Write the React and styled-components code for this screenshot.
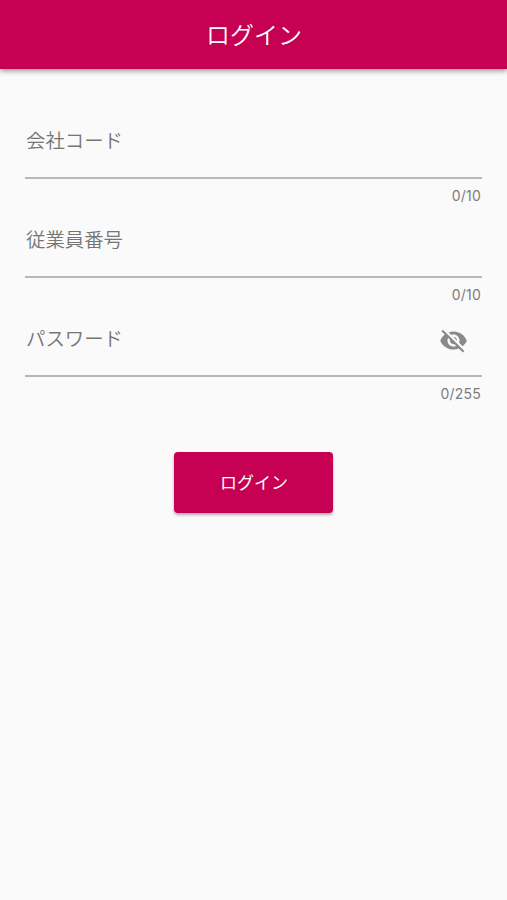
import { useState } from 'react';
import styled, { createGlobalStyle } from 'styled-components';
import { MdVisibility, MdVisibilityOff } from 'react-icons/md';

const FIELDS = [
    { name: 'company', label: '会社コード', max: 10 },
    { name: 'employee', label: '従業員番号', max: 10 },
    { name: 'password', label: 'パスワード', max: 255, secret: true },
];

const App = () => {
    const [values, setValues] = useState({ company: '', employee: '', password: '' });
    const [visible, setVisible] = useState(false);

    return (
        <Screen>
            <GlobalStyle/>
            <AppBar>
                <h1>ログイン</h1>
            </AppBar>
            <Form onSubmit={(e) => e.preventDefault()}>
                {FIELDS.map((field) => (
                    <Field key={field.name}>
                        <InputRow>
                            <input
                                type={field.secret && !visible ? 'password' : 'text'}
                                placeholder={field.label}
                                maxLength={field.max}
                                value={values[field.name]}
                                onChange={(e) => setValues({ ...values, [field.name]: e.target.value })}
                            />
                            {field.secret && (
                                <Toggle type='button' onClick={() => setVisible(!visible)}>
                                    {visible ? <MdVisibility/> : <MdVisibilityOff/>}
                                </Toggle>
                            )}
                        </InputRow>
                        <Counter>{values[field.name].length}/{field.max}</Counter>
                    </Field>
                ))}
                <Submit type='submit'>ログイン</Submit>
            </Form>
        </Screen>
    );
}

const GlobalStyle = createGlobalStyle`
    * {
        box-sizing: border-box;
    }

    body {
        margin: 0;
        background-color: #fafafa;
    }

    body, input, button {
        font-family: Inter, "Noto Sans CJK JP", sans-serif;
    }
`;

const Screen = styled.div`
    min-height: 900px;
    background-color: #fafafa;
`;

const AppBar = styled.header`
    display: flex;
    align-items: center;
    justify-content: center;
    height: 69px;
    background-color: #c60052;
    box-shadow: 0 2px 5px rgb(0 0 0 / 40%);

    h1 {
        margin: 0;
        padding: 0 0 2px 1px;
        font-size: 24px;
        font-weight: 350;
        color: #fff;
    }
`;

const Form = styled.form`
    display: flex;
    flex-direction: column;
    padding: 50px 25px 0;
`;

const Field = styled.div`
    height: 99px;
`;

const InputRow = styled.div`
    display: flex;
    align-items: center;
    height: 60px;
    border-bottom: 2px solid #b8b8b8;

    input {
        flex: 1;
        min-width: 0;
        height: 40px;
        margin-bottom: 15px;
        padding: 0 0 0 1px;
        border: none;
        outline: none;
        background-color: transparent;
        font-size: 19.4px;
        font-weight: 350;
        color: #212121;
    }

    input::placeholder {
        color: #757575;
        opacity: 1;
    }
`;

const Toggle = styled.button`
    display: flex;
    margin: 0 14px 11px 0;
    padding: 0;
    border: none;
    background-color: transparent;
    font-size: 29px;
    color: #8a8a8a;
`;

const Counter = styled.div`
    margin-top: 8px;
    padding-right: 1px;
    text-align: right;
    font-size: 14px;
    line-height: 18px;
    letter-spacing: 0.2px;
    color: #7c7c7c;
`;

const Submit = styled.button`
    align-self: center;
    width: 159px;
    height: 61px;
    margin-top: 36px;
    padding: 0 0 2px 1px;
    border: none;
    border-radius: 4px;
    background-color: #c60052;
    box-shadow: 0 2px 3px rgb(0 0 0 / 30%);
    font-size: 17px;
    color: #fff;
`;

export default App;
